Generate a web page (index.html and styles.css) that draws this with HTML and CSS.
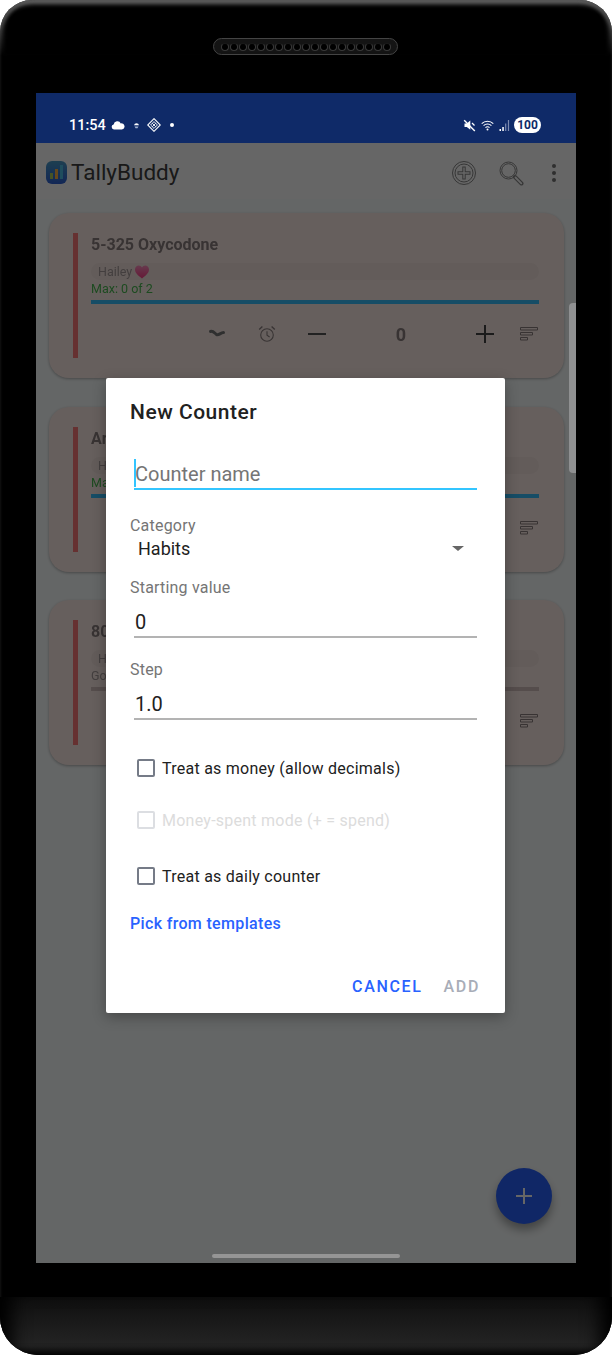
FILE: index.html
```html
<!DOCTYPE html>
<html lang="en">

<head>
    <meta charset="UTF-8" />
    <meta name="viewport" content="width=device-width, initial-scale=1.0" />
    <title>TallyBuddy - New Counter</title>
    <link rel="stylesheet" href="styles.css">
</head>

<body>
    <svg class="defs" width="0" height="0">
        <symbol id="i-wave" viewBox="0 0 18 10">
            <path d="M2.5 2.5C5 1.5 6.5 4 8.5 5.5 10.5 7 12.5 3.5 15.5 3.5" fill="none" stroke="currentColor" stroke-width="3" stroke-linecap="round" stroke-linejoin="round" />
        </symbol>
        <symbol id="i-alarm" viewBox="0 0 18 18">
            <circle cx="9" cy="10" r="6.3" fill="none" stroke="currentColor" stroke-width="1.1" />
            <path d="M9 6.2V10.2L11.6 12" fill="none" stroke="currentColor" stroke-width="1.1" />
            <path d="M1.2 4.6 4.4 1.6M16.8 4.6 13.6 1.6" fill="none" stroke="currentColor" stroke-width="1.4" />
        </symbol>
        <symbol id="i-sort" viewBox="0 0 18 14">
            <path d="M.5.5H17.5V3H.5ZM.5 5.5H12.5V8H.5ZM.5 10.5H7.5V13H.5Z" fill="none" stroke="currentColor" stroke-width="1" />
        </symbol>
    </svg>

    <div class="phone">
        <div class="speaker">
            <i></i><i></i><i></i><i></i><i></i><i></i><i></i><i></i><i></i><i></i>
            <i></i><i></i><i></i><i></i><i></i><i></i><i></i><i></i><i></i>
        </div>

        <div class="screen">
            <div class="status-bar">
                <div class="status-left">
                    <span class="time">11:54</span>
                    <svg class="st-cloud" width="14" height="10" viewBox="0 0 14 10">
                        <path d="M3 9.5A2.6 2.6 0 0 1 2.6 4.4 3.8 3.8 0 0 1 9.8 3.4 3.1 3.1 0 0 1 11 9.5Z" fill="#fff" />
                    </svg>
                    <svg class="st-mini" width="7" height="7" viewBox="0 0 7 7">
                        <path d="M1 3.2A2.6 2.6 0 0 1 6 3.2Z" fill="#fff" />
                        <path d="M1.5 4.6H5.5L4.5 6.2H2.5Z" fill="#9fb0d0" />
                    </svg>
                    <svg class="st-diamond" width="14" height="14" viewBox="0 0 14 14">
                        <path d="M7 .7 13.3 7 7 13.3 .7 7Z" fill="none" stroke="#fff" stroke-width="1.1" />
                        <path d="M7 3.6 10.4 7 7 10.4 3.6 7ZM5.2 5.2 8.8 8.8M8.8 5.2 5.2 8.8" fill="none" stroke="#fff" stroke-width=".9" />
                    </svg>
                    <span class="st-dot"></span>
                </div>
                <div class="status-right">
                    <svg width="13" height="13" viewBox="0 0 13 13">
                        <path d="M1.5 4.6H3.8L7.3 1.6V10.8L3.8 8H1.5Z" fill="#fff" />
                        <path d="M1.2 1.2 11.8 12" stroke="#fff" stroke-width="1.4" />
                        <path d="M9 4 11.5 6.5" stroke="#fff" stroke-width="1.2" />
                    </svg>
                    <svg width="13" height="11" viewBox="0 0 13 11">
                        <path d="M.7 3.6A8.2 8.2 0 0 1 12.3 3.6M2.6 5.6A5.5 5.5 0 0 1 10.4 5.6M4.5 7.6A2.8 2.8 0 0 1 8.5 7.6" fill="none" stroke="#fff" stroke-width="1.1" />
                        <circle cx="6.5" cy="9.6" r="1" fill="#fff" />
                    </svg>
                    <svg width="11" height="12" viewBox="0 0 11 12">
                        <path d="M.5 10H2V12H.5Z" fill="#fff" />
                        <path d="M3.3 8H4.8V12H3.3Z" fill="#fff" />
                        <path d="M6.1 4.5H7.3V12H6.1ZM8.9 1H10.1V12H8.9Z" fill="#7c8bb0" />
                    </svg>
                    <span class="battery">100</span>
                </div>
            </div>

            <div class="content">
                <header class="app-bar">
                    <svg class="logo" width="21" height="23" viewBox="0 0 21 23">
                        <defs>
                            <linearGradient id="logo-bg" x1="0" y1="0" x2="0" y2="1">
                                <stop offset="0" stop-color="#4a9cc9" />
                                <stop offset="1" stop-color="#2f62d6" />
                            </linearGradient>
                        </defs>
                        <rect width="21" height="23" rx="6" fill="url(#logo-bg)" />
                        <rect x="4" y="12" width="3" height="6" fill="#b0d060" />
                        <rect x="9" y="8" width="3" height="10" fill="#ffb347" />
                        <rect x="14" y="4" width="3" height="14" fill="#4fc0e8" />
                    </svg>
                    <span class="app-title">TallyBuddy</span>
                    <div class="app-actions">
                        <svg width="26" height="26" viewBox="0 0 26 26">
                            <circle cx="13" cy="13" r="11.5" fill="none" stroke="#888" stroke-width="1" />
                            <circle cx="13" cy="13" r="9" fill="none" stroke="#888" stroke-width="1" />
                            <path d="M13 6.5V19.5M6.5 13H19.5" stroke="#888" stroke-width="3.4" />
                            <path d="M13 7.5V18.5M7.5 13H18.5" stroke="#fff" stroke-width="1.4" />
                        </svg>
                        <svg width="26" height="26" viewBox="0 0 26 26">
                            <circle cx="10.5" cy="10.5" r="8.5" fill="none" stroke="#888" stroke-width="1" />
                            <circle cx="10.5" cy="10.5" r="6.8" fill="none" stroke="#888" stroke-width="1" />
                            <path d="M17 17 23.5 23.5" stroke="#888" stroke-width="4" stroke-linecap="round" />
                            <path d="M17.5 17.5 23.3 23.3" stroke="#fff" stroke-width="1.8" stroke-linecap="round" />
                        </svg>
                        <div class="kebab"><i></i><i></i><i></i></div>
                    </div>
                </header>

                <div class="counter-list">
                    <div class="card">
                        <div class="card-bar"></div>
                        <div class="card-body">
                            <div class="card-title">5-325 Oxycodone</div>
                            <div class="chip">Hailey
                                <svg width="14" height="14" viewBox="0 0 14 14">
                                    <defs>
                                        <linearGradient id="heart" x1="0" y1="0" x2="0" y2="1">
                                            <stop offset="0" stop-color="#ff8fc0" />
                                            <stop offset="1" stop-color="#ff3f8a" />
                                        </linearGradient>
                                    </defs>
                                    <path d="M7 13.5C3 10.5 0 8 0 4.6 0 2 2 .6 3.8.6 5.2.6 6.4 1.4 7 2.6 7.6 1.4 8.8.6 10.2.6 12 .6 14 2 14 4.6 14 8 11 10.5 7 13.5Z" fill="url(#heart)" />
                                </svg>
                            </div>
                            <div class="limit">Max: 0 of 2</div>
                            <div class="progress"></div>
                            <div class="controls">
                                <svg class="ctl-wave" width="18" height="10"><use href="#i-wave" /></svg>
                                <svg class="ctl-alarm" width="18" height="18"><use href="#i-alarm" /></svg>
                                <span class="ctl-minus"></span>
                                <span class="ctl-value">0</span>
                                <span class="ctl-plus"></span>
                                <svg class="ctl-sort" width="18" height="14"><use href="#i-sort" /></svg>
                            </div>
                        </div>
                    </div>

                    <div class="card">
                        <div class="card-bar"></div>
                        <div class="card-body">
                            <div class="card-title">Ar</div>
                            <div class="chip">H</div>
                            <div class="limit">Ma</div>
                            <div class="progress"></div>
                            <div class="controls">
                                <svg class="ctl-sort" width="18" height="14"><use href="#i-sort" /></svg>
                            </div>
                        </div>
                    </div>

                    <div class="card">
                        <div class="card-bar"></div>
                        <div class="card-body">
                            <div class="card-title">80</div>
                            <div class="chip">H</div>
                            <div class="limit limit-goal">Go</div>
                            <div class="progress progress-empty"></div>
                            <div class="controls">
                                <svg class="ctl-sort" width="18" height="14"><use href="#i-sort" /></svg>
                            </div>
                        </div>
                    </div>
                </div>

                <div class="fab"><span class="fab-plus"></span></div>
            </div>

            <div class="scrim"></div>
            <div class="scrollbar"></div>
            <div class="home-bar"></div>

            <div class="dialog">
                <h2 class="dialog-title">New Counter</h2>

                <div class="field field-name">
                    <span class="caret"></span>
                    <span class="placeholder">Counter name</span>
                </div>

                <div class="label label-category">Category</div>
                <div class="select">
                    <span>Habits</span>
                    <span class="select-arrow"></span>
                </div>

                <div class="label label-start">Starting value</div>
                <div class="field field-gap">0</div>

                <div class="label label-step">Step</div>
                <div class="field field-gap">1.0</div>

                <div class="check check-money"><span class="box"></span>Treat as money (allow decimals)</div>
                <div class="check check-spent is-disabled"><span class="box"></span>Money-spent mode (+ = spend)</div>
                <div class="check check-daily"><span class="box"></span>Treat as daily counter</div>

                <a class="templates" href="#">Pick from templates</a>

                <div class="dialog-actions">
                    <span class="btn">CANCEL</span>
                    <span class="btn btn-off">ADD</span>
                </div>
            </div>
        </div>

        <div class="chin"></div>
    </div>
</body>

</html>
```

FILE: styles.css
```css
* {
    box-sizing: border-box;
}

body {
    margin: 0;
    background-color: #fff;
    font-family: Roboto, "Liberation Sans", sans-serif;
}

.defs {
    position: absolute;
}

/* device frame */
.phone {
    position: relative;
    width: 612px;
    height: 1355px;
    padding-top: 38px;
    background-color: #000;
    border-radius: 32px 32px 38px 38px;
    box-shadow: inset 0 6px 4px -2px #6a6a6a;
    overflow: hidden;
}

/* corner shine, fades out below the curve */
.phone::before {
    content: "";
    position: absolute;
    top: 0;
    left: 0;
    right: 0;
    height: 56px;
    border-radius: 32px 32px 0 0;
    box-shadow: inset 4px 0 4px -1px #484848, inset -4px 0 4px -1px #484848;
    -webkit-mask-image: linear-gradient(#000 40%, transparent);
    mask-image: linear-gradient(#000 40%, transparent);
}

.speaker {
    display: flex;
    justify-content: center;
    align-items: center;
    gap: 1px;
    width: 185px;
    height: 17px;
    margin: 0 0 38px 213px;
    background-color: #141414;
    border: 1px solid #444;
    border-radius: 9px;
}

.speaker i {
    width: 8px;
    height: 8px;
    border-radius: 50%;
    background-color: #000;
    border: 1px solid #3a3a3a;
    border-top-color: #1a1a1a;
}

.screen {
    position: relative;
    width: 540px;
    height: 1170px;
    margin-left: 36px;
    overflow: hidden;
}

.chin {
    height: 58px;
    margin-top: 34px;
    background: linear-gradient(#0f0f0f, #242424 85%, #131313);
    box-shadow: inset 22px 0 18px -10px #000, inset -22px 0 18px -10px #000, inset 0 -6px 8px -4px #000;
}

/* status bar */
.status-bar {
    display: flex;
    justify-content: space-between;
    align-items: center;
    height: 50px;
    padding: 14px 35px 0 33px;
    background-color: #0f2a68;
    color: #fff;
}

.status-left,
.status-right {
    display: flex;
    align-items: center;
}

.time {
    font-size: 14.5px;
    font-weight: 500;
    width: 42px;
}

.st-mini {
    margin-left: 8px;
}

.st-diamond {
    margin-left: 7px;
}

.st-dot {
    width: 4px;
    height: 4px;
    margin-left: 9px;
    border-radius: 50%;
    background-color: #fff;
}

.status-right {
    gap: 5px;
}

.battery {
    width: 27px;
    height: 16px;
    margin-left: -1px;
    border-radius: 8px;
    background-color: #fff;
    color: #0f2a68;
    font-size: 12px;
    font-weight: 700;
    line-height: 16px;
    text-align: center;
}

/* page under the dialog */
.content {
    position: relative;
    height: 1120px;
    background-color: #fbffff;
}

.app-bar {
    display: flex;
    align-items: center;
    height: 56px;
    padding: 3px 15px 0 10px;
    background-color: #fff;
}

.app-title {
    margin: 0 0 2px 4px;
    color: #404040;
    font-size: 22.5px;
}

.app-actions {
    display: flex;
    align-items: center;
    gap: 21px;
    margin-left: auto;
}

.kebab {
    display: flex;
    flex-direction: column;
    gap: 3px;
    margin-left: 2px;
    padding: 0 5px;
}

.kebab i {
    width: 4px;
    height: 4px;
    border-radius: 50%;
    background-color: #777;
}

.counter-list {
    display: flex;
    flex-direction: column;
    gap: 28.5px;
    padding: 14px 12px 0 13px;
    filter: blur(.4px);
}

.card {
    display: flex;
    gap: 13px;
    height: 165px;
    padding: 20px 25px 20px 24px;
    background-color: #ffeee9;
    border-radius: 20px;
    box-shadow: 0 1px 3px rgba(0, 0, 0, .3);
}

.card-bar {
    width: 5px;
    background-color: #ff7a7a;
}

.card-body {
    flex: 1;
}

.card-title {
    height: 22px;
    color: #8c8080;
    font-size: 16px;
    font-weight: 700;
    line-height: 24px;
}

.chip {
    display: flex;
    align-items: center;
    gap: 3px;
    height: 17px;
    margin-top: 8px;
    padding-left: 7px;
    background-color: #f7e6e1;
    border-radius: 9px;
    color: #a89c9c;
    font-size: 12.5px;
}

.limit {
    height: 15px;
    margin-top: 1px;
    color: #4aba52;
    font-size: 12.5px;
    line-height: 15px;
}

.limit-goal {
    color: #a89c9c;
}

.progress {
    height: 4px;
    margin-top: 4px;
    background-color: #38c0ff;
}

.progress-empty {
    background-color: #d4c0bd;
}

.controls {
    display: grid;
    grid-template-columns: 101px 50px 50px 50px 118px 50px 29px;
    align-items: center;
    justify-items: center;
    height: 26px;
    margin-top: 17px;
    color: #8c8080;
}

.ctl-wave {
    grid-column: 2;
    color: #777;
}

.ctl-alarm {
    grid-column: 3;
}

.ctl-minus {
    grid-column: 4;
    width: 18px;
    height: 2px;
    background-color: #555;
}

.ctl-value {
    grid-column: 5;
    color: #8c8080;
    font-size: 18px;
    font-weight: 700;
}

.ctl-plus {
    position: relative;
    grid-column: 6;
    width: 18px;
    height: 2px;
    background-color: #444;
}

.ctl-plus::after {
    content: "";
    position: absolute;
    left: 8px;
    top: -8px;
    width: 2px;
    height: 18px;
    background-color: #444;
}

.ctl-sort {
    grid-column: 7;
    justify-self: end;
    margin-right: 1px;
}

.fab {
    position: absolute;
    right: 24px;
    bottom: 39px;
    display: flex;
    justify-content: center;
    align-items: center;
    width: 56px;
    height: 56px;
    border-radius: 50%;
    background-color: #2962ff;
    box-shadow: 0 6px 10px rgba(0, 0, 0, .35);
}

.fab-plus {
    position: relative;
    width: 16px;
    height: 2px;
    background-color: #fff;
}

.fab-plus::after {
    content: "";
    position: absolute;
    left: 7px;
    top: -7px;
    width: 2px;
    height: 16px;
    background-color: #fff;
}

/* overlays */
.scrim {
    position: absolute;
    top: 50px;
    right: 0;
    bottom: 0;
    left: 0;
    background-color: rgba(0, 0, 0, .6);
}

.scrollbar {
    position: absolute;
    top: 210px;
    right: 0;
    width: 7px;
    height: 170px;
    background-color: #8f9091;
    border-radius: 4px 0 0 4px;
}

.home-bar {
    position: absolute;
    left: 176px;
    bottom: 5px;
    width: 188px;
    height: 4px;
    background-color: #959595;
    border-radius: 2px;
}

.dialog {
    position: absolute;
    top: 285px;
    left: 70px;
    width: 399px;
    height: 635px;
    padding: 20px 28px 0 24px;
    background-color: #fff;
    border-radius: 2px;
    box-shadow: 0 4px 14px rgba(0, 0, 0, .3);
    color: #212121;
}

.dialog-title {
    height: 28px;
    margin: 0;
    font-size: 21px;
    font-weight: 500;
    letter-spacing: .5px;
    line-height: 28px;
}

.field {
    height: 30px;
    margin-left: 4px;
    padding-left: 1px;
    border-bottom: 2px solid #b3b3b3;
    font-size: 20px;
    line-height: 29px;
}

.field-name {
    position: relative;
    height: 31px;
    margin-top: 33px;
    padding-left: 0;
    border-bottom-color: #33c5ff;
    line-height: 31px;
}

.caret {
    position: absolute;
    left: 0;
    top: 0;
    width: 2px;
    height: 28px;
    background-color: #33c5ff;
}

.placeholder {
    margin-left: 1px;
    color: #757575;
}

.label {
    height: 18px;
    color: #757575;
    font-size: 16px;
    letter-spacing: .2px;
    line-height: 18px;
}

.label-category {
    margin-top: 27px;
}

.label-start {
    margin-top: 20px;
}

.label-step {
    margin-top: 23px;
}

.field-gap {
    margin-top: 11px;
}

.select {
    display: flex;
    justify-content: space-between;
    align-items: center;
    height: 22px;
    margin-top: 2px;
    padding: 0 13px 0 8px;
    font-size: 18px;
}

.select-arrow {
    width: 0;
    height: 0;
    border-top: 5px solid #666;
    border-left: 6px solid transparent;
    border-right: 6px solid transparent;
}

.check {
    display: flex;
    align-items: center;
    gap: 7px;
    height: 24px;
    margin-left: 7px;
    font-size: 16px;
    letter-spacing: .25px;
}

.box {
    width: 18px;
    height: 18px;
    border: 2px solid #757b87;
    border-radius: 2px;
}

.check-money {
    margin-top: 36px;
}

.check-spent {
    margin-top: 28px;
}

.check-daily {
    margin-top: 32px;
}

.is-disabled {
    color: #dcdcdc;
}

.is-disabled .box {
    border-color: #dcdee2;
}

.templates {
    display: block;
    height: 20px;
    margin-top: 26px;
    color: #2962ff;
    font-size: 16px;
    font-weight: 500;
    letter-spacing: .34px;
    line-height: 20px;
    text-decoration: none;
}

.dialog-actions {
    display: flex;
    justify-content: flex-end;
    gap: 21px;
    margin: 43px -3px 0 0;
}

.btn {
    color: #2962ff;
    font-size: 16px;
    font-weight: 500;
    letter-spacing: 1.65px;
    line-height: 20px;
}

.btn-off {
    color: #a8adb8;
}
```
